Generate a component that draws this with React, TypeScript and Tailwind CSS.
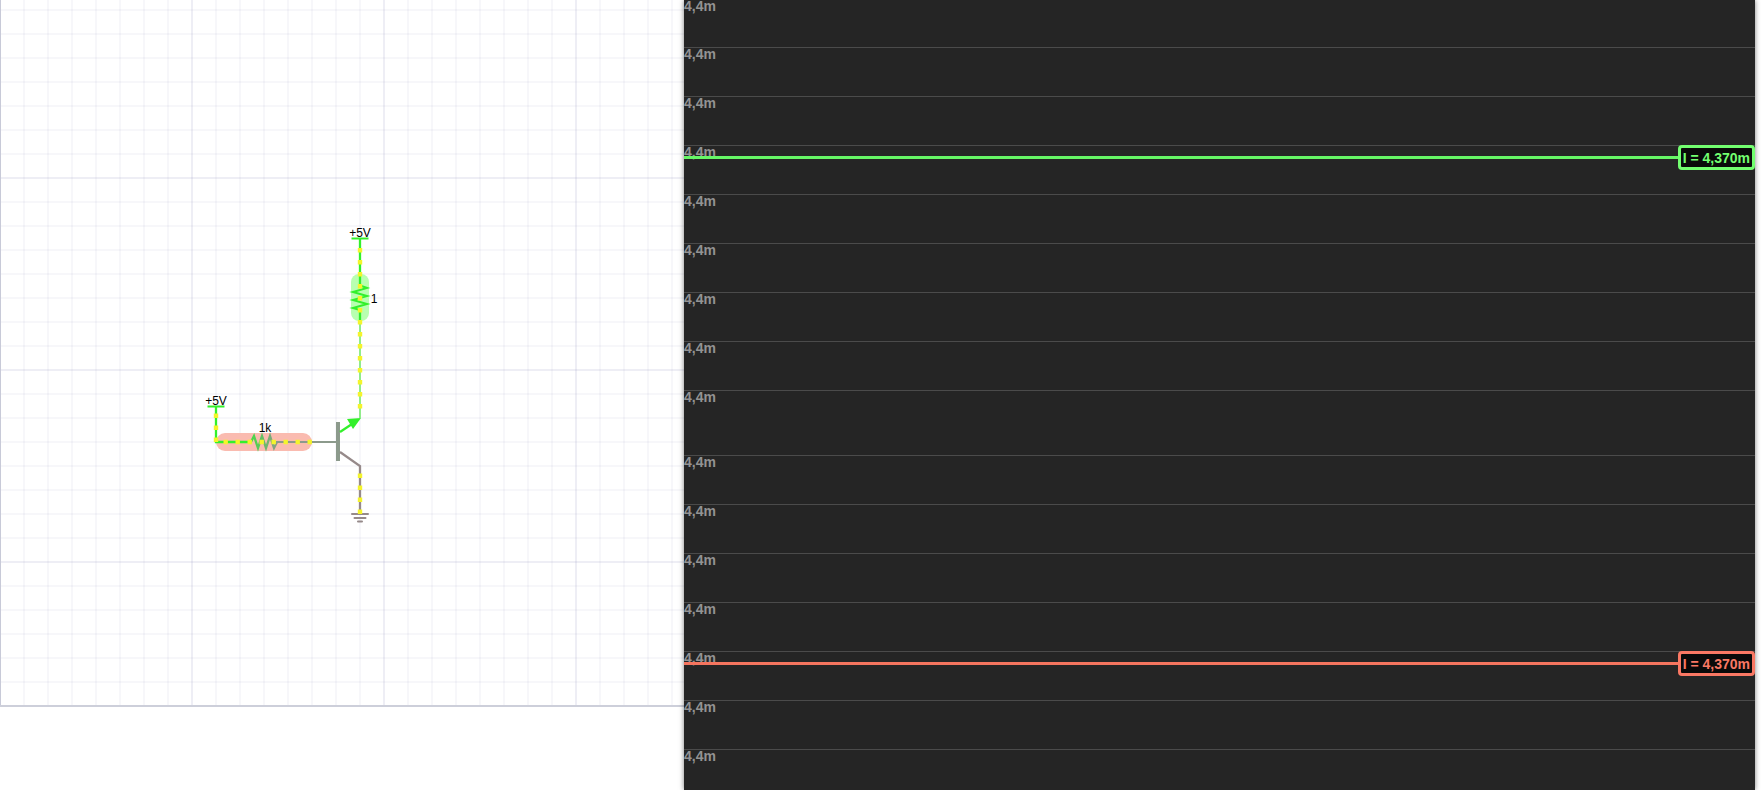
import { ReactNode } from 'react';

/**
 * Circuit simulator: schematic sheet on the left, current scopes on the right
 */

const CELL = 24;
const SHEET_WIDTH = 721;
const SHEET_HEIGHT = 707;
const GRID_TOP = 10;

const columns = Array.from({ length: 29 }, (_, i) => (i + 1) * CELL);
const rows = Array.from({ length: 29 }, (_, i) => GRID_TOP + i * CELL);

function SheetGrid() {
  return (
    <g strokeWidth="2">
      {columns.map((x, i) => (
        <line key={x} x1={x} x2={x} y1="0" y2={SHEET_HEIGHT} stroke={(i + 1) % 8 === 0 ? '#9696be' : '#8c91b4'} strokeOpacity={(i + 1) % 8 === 0 ? 0.16 : 0.07} />
      ))}
      {rows.map((y, i) => (
        <line key={y} x1="0" x2={SHEET_WIDTH} y1={y} y2={y} stroke={i % 8 === 7 ? '#9696be' : '#8c91b4'} strokeOpacity={i % 8 === 7 ? 0.16 : 0.07} />
      ))}
      <line x1="0.5" x2="0.5" y1="0" y2={SHEET_HEIGHT} stroke="#c8cad8" strokeWidth="1" />
      <line x1="0" x2={SHEET_WIDTH} y1="706" y2="706" stroke="#cdcfda" />
    </g>
  );
}

function Schematic() {
  return (
    <svg width={SHEET_WIDTH} height={SHEET_HEIGHT} fill="none" className="block shrink-0" role="img" aria-label="Schematic">
      <defs>
        <linearGradient id="drop" x1="250" x2="278" y1="0" y2="0" gradientUnits="userSpaceOnUse">
          <stop offset="0" stopColor="#44dd44" />
          <stop offset="1" stopColor="#8c9a8c" />
        </linearGradient>
      </defs>
      <SheetGrid />

      {/* Probe highlights */}
      <rect x="351" y="274" width="18" height="47" rx="8" fill="#b8ffb0" />
      <rect x="216" y="433" width="96" height="18" rx="9" fill="#fabbb0" />

      {/* Emitter branch */}
      <path d="M351.5 238.5H368.5" stroke="#33f02b" strokeWidth="2" />
      <path d="M360 239V286M360 309V321" stroke="#33f02b" strokeWidth="2.3" />
      <path d="M360 285.500L367 288L353 292L367 296L353 300L367 304L353 308L360 310" stroke="#33f02b" strokeWidth="2" />
      <path d="M360 321V418" stroke="#91ec8b" strokeWidth="2" />

      {/* Base branch */}
      <path d="M207.500 406.500H224.500" stroke="#33f02b" strokeWidth="2" />
      <path d="M216 407V442H252" stroke="#33f02b" strokeWidth="2.3" />
      <path d="M251 442L254 436L258 448L262 436L266 448L270 436L274 448L277 442" stroke="url(#drop)" strokeWidth="2.3" />
      <path d="M276 442H337" stroke="#8c9a8c" strokeWidth="2" />

      {/* Transistor */}
      <rect x="336" y="422" width="4" height="39" fill="#8c9a8c" />
      <path d="M340 432L352 424" stroke="#33f02b" strokeWidth="2.300" />
      <path d="M361 418L347 419L353 429Z" fill="#33f02b" />
      <path d="M340 452L360 466V513" stroke="#968a8a" strokeWidth="2.3" />
      <path d="M352 514H368M354.500 518H365.500M358 521.500H362" stroke="#968a8a" strokeWidth="2" strokeLinecap="round" />

      {/* Moving charges */}
      <g stroke="#f4f42c" strokeWidth="4.400" strokeDasharray="4.400 7.600">
        <path d="M360 248V411" />
        <path d="M216 413.500V442" />
        <path d="M223.500 442H312" />
        <path d="M360 473.500V514" />
      </g>

      <g fill="#000" fontSize="12" textAnchor="middle" className="font-['Liberation_Sans',sans-serif]">
        <text x="360" y="237">+5V</text>
        <text x="374" y="303">1</text>
        <text x="216" y="405">+5V</text>
        <text x="265" y="432">1k</text>
      </g>
    </svg>
  );
}

function ScopeRow({ label = '4,4m', className = 'h-[49px] border-t' }: { label?: string; className?: string }) {
  return (
    <div className={`shrink-0 border-[#4b4b4b] text-sm leading-3 font-bold text-[#939393] ${className}`}>{label}</div>
  );
}

interface ScopeProps {
  reading: string;
  className: string;
  traceClassName: string;
  lineClassName: string;
  badgeClassName: string;
  children: ReactNode;
}

function Scope({ reading, className, traceClassName, lineClassName, badgeClassName, children }: ScopeProps) {
  return (
    <section className={`relative flex flex-col overflow-hidden ${className}`}>
      {children}
      <div className={`absolute inset-x-0 flex h-[25px] items-center ${traceClassName}`}>
        <div className={`h-[3px] flex-1 ${lineClassName}`} />
        <output className={`flex h-full items-center rounded border-[3px] bg-[#0a0a0a] px-0.5 text-sm leading-4 font-bold ${badgeClassName}`}>
          {reading}
        </output>
      </div>
    </section>
  );
}

export default function App() {
  return (
    <div className="flex h-screen overflow-hidden bg-white pr-[6px] font-['Liberation_Sans',sans-serif]">
      <main className="flex w-[684px] shrink-0 items-start">
        <Schematic />
      </main>
      <aside className="relative flex min-w-0 flex-1 flex-col bg-[#252525] shadow-[0_0_5px_rgba(0,0,0,0.5)]">
        <Scope
          reading="I = 4,370m"
          className="shrink-0"
          traceClassName="top-[145px]"
          lineClassName="bg-[#66f766]"
          badgeClassName="border-[#73ff70] text-[#73ff70]"
        >
          <ScopeRow className="h-[47px]" />
          <ScopeRow />
          <ScopeRow />
          <ScopeRow />
          <ScopeRow />
          <ScopeRow />
          <ScopeRow />
          <ScopeRow />
          <ScopeRow className="h-[65px] border-t" />
        </Scope>
        <Scope
          reading="I = 4,370m"
          className="flex-1"
          traceClassName="top-[196px]"
          lineClassName="bg-[#f5755f]"
          badgeClassName="border-[#fa7864] text-[#fa7864]"
        >
          <ScopeRow />
          <ScopeRow />
          <ScopeRow />
          <ScopeRow />
          <ScopeRow />
          <ScopeRow />
          <ScopeRow />
        </Scope>
      </aside>
    </div>
  );
}
